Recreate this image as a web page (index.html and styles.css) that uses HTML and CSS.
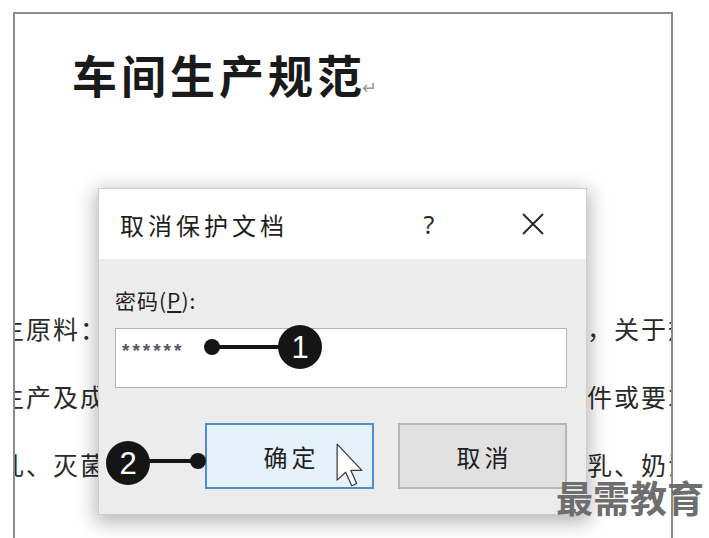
FILE: index.html
```html
<!DOCTYPE html>
<html lang="zh-CN">
<head>
    <meta charset="UTF-8">
    <meta name="viewport" content="width=device-width, initial-scale=1.0">
    <title>取消保护文档</title>
    <link rel="stylesheet" href="styles.css">
</head>
<body>
    <div class="stage">
        <div class="doc">
            <h1 class="doc-title">车间生产规范<span class="mark">↵</span></h1>
            <p class="doc-line"><span class="cut-left">生原料：采购</span><span class="cut-right">，关于规</span></p>
            <p class="doc-line"><span class="cut-left">生产及成品</span><span class="cut-right">条件或要求</span></p>
            <p class="doc-line"><span class="cut-left">乳、灭菌乳</span><span class="cut-right">乳、奶油</span></p>
        </div>

        <div class="dialog">
            <div class="dialog-head">
                <span class="dialog-title">取消保护文档</span>
                <span class="help">?</span>
                <svg class="close" width="24" height="24" viewBox="0 0 24 24">
                    <path d="M2 2 L22 22 M22 2 L2 22" stroke="#2a2a2a" stroke-width="2" fill="none"/>
                </svg>
            </div>
            <div class="dialog-body">
                <label class="field-label" for="pwd">密码(<u>P</u>):</label>
                <div class="field" id="pwd">******</div>
                <div class="actions">
                    <button class="btn btn-ok">确定
                        <svg class="cursor" width="27" height="45" viewBox="0 0 12 20">
                            <path d="M0.5 0.5 L0.5 16.5 L4.3 13 L7 19 L9.2 18 L6.6 12.2 L11.5 12.2 Z" fill="#fff" stroke="#3a3a3a" stroke-width="0.55" stroke-linejoin="round"/>
                        </svg>
                    </button>
                    <button class="btn">取消</button>
                </div>
            </div>
        </div>

        <!-- callout markers -->
        <svg class="callouts" width="709" height="538">
            <line x1="212" y1="347" x2="290" y2="347" stroke="#151515" stroke-width="4"/>
            <circle cx="212" cy="347" r="8" fill="#151515"/>
            <circle cx="300" cy="347" r="22" fill="#151515"/>
            <text x="300" y="358" class="num">1</text>

            <line x1="130" y1="461" x2="198" y2="461" stroke="#151515" stroke-width="4"/>
            <circle cx="198" cy="461" r="8" fill="#151515"/>
            <circle cx="128" cy="463" r="22" fill="#151515"/>
            <text x="128" y="474" class="num">2</text>
        </svg>

        <div class="watermark">最需教育</div>
    </div>
</body>
</html>
```

FILE: styles.css
```css
html, body {
    margin: 0;
    height: 538px;
    overflow: hidden;
    background: #fff;
}
.stage {
    position: relative;
    box-sizing: border-box;
    width: 709px;
    height: 538px;
    padding-top: 12px;
    overflow: hidden;
    font-family: "Noto Sans CJK SC", sans-serif;
    color: #1e1e1e;
}
.doc {
    box-sizing: border-box;
    width: 660px;
    height: 560px;
    margin-left: 13px;
    border: 2px solid #8c8c8c;
    border-bottom: none;
    overflow: hidden;
}
.doc-title {
    margin: 35px 0 0 57px;
    font-family: "Liberation Serif", "Noto Sans CJK SC", serif;
    font-size: 45px;
    font-weight: bold;
    letter-spacing: 4px;
    line-height: 60px;
    color: #1a1a1a;
}
.mark {
    font-size: 18px;
    font-weight: normal;
    color: #999;
    margin-left: -4px;
}
.doc-line {
    display: flex;
    justify-content: space-between;
    margin: 0 -24px 0 -16px;
    font-size: 25px;
    letter-spacing: 2px;
    line-height: 68px;
    white-space: nowrap;
    color: #2a2a2a;
}
.doc-title + .doc-line {
    margin-top: 176px;
}
.dialog {
    position: absolute;
    left: 98px;
    top: 188px;
    box-sizing: border-box;
    width: 489px;
    height: 327px;
    background: #ececec;
    border: 1px solid #cdcdcd;
    box-shadow: 0 5px 18px 3px rgba(0,0,0,0.28);
}
.dialog-head {
    display: flex;
    align-items: center;
    height: 70px;
    padding: 0 31px 0 21px;
    background: #fff;
}
.dialog-title {
    flex: 1;
    font-size: 24px;
    letter-spacing: 4px;
}
.help {
    width: 40px;
    margin-right: 62px;
    text-align: center;
    font-family: "Noto Sans", sans-serif;
    font-size: 25px;
    color: #2a2a2a;
}
.close {
    margin: 0 10px;
}
.dialog-body {
    display: flex;
    flex-direction: column;
    padding: 25px 19px 0 16px;
}
.field-label {
    font-size: 21px;
    line-height: 32px;
    letter-spacing: 1px;
    margin-bottom: 12px;
}
.field {
    box-sizing: border-box;
    height: 60px;
    padding: 12px 6px 0;
    background: #fff;
    border: 1px solid #b3b3b3;
    font-family: "Liberation Sans", sans-serif;
    font-size: 19px;
    font-weight: bold;
    letter-spacing: 3px;
    line-height: 20px;
    color: #555a66;
}
.actions {
    display: flex;
    justify-content: flex-end;
    gap: 24px;
    margin-top: 35px;
}
.btn {
    position: relative;
    box-sizing: border-box;
    width: 169px;
    height: 66px;
    padding: 0 0 0 4px;
    background: #e1e1e1;
    border: 2px solid #b6b6b6;
    font-family: "Noto Sans CJK SC", sans-serif;
    font-size: 24px;
    letter-spacing: 4px;
    color: #1e1e1e;
}
.btn-ok {
    background: #e5f1fb;
    border-color: #4f8fcf;
}
.cursor {
    position: absolute;
    left: 129px;
    top: 18px;
}
.callouts {
    position: absolute;
    left: 0;
    top: 0;
    pointer-events: none;
}
.num {
    font-family: "Liberation Sans", sans-serif;
    font-size: 31px;
    fill: #fff;
    text-anchor: middle;
}
.watermark {
    position: absolute;
    left: 556px;
    top: 476px;
    font-size: 37px;
    font-weight: bold;
    line-height: 42px;
    color: #6e6e6e;
}
```
